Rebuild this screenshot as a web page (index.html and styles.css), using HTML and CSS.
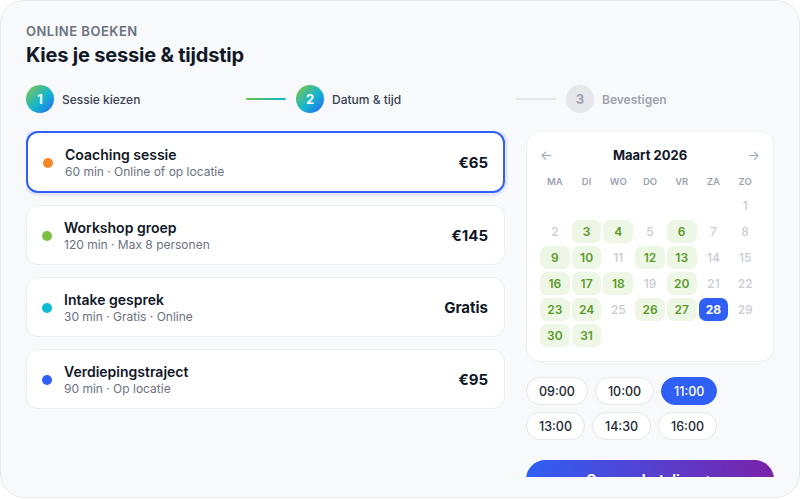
FILE: index.html
```html
<!DOCTYPE html>
<html lang="nl">
<head>
<meta charset="utf-8">
<title>Online boeken</title>
<link rel="stylesheet" href="styles.css">
</head>
<body>
<div class="card">
  <div class="eyebrow">ONLINE BOEKEN</div>
  <h1 class="title">Kies je sessie &amp; tijdstip</h1>
  <div class="steps">
    <div class="step done">
      <span class="num">1</span><span class="label">Sessie kiezen</span>
      <span class="line active"></span>
    </div>
    <div class="step done">
      <span class="num">2</span><span class="label">Datum &amp; tijd</span>
      <span class="line"></span>
    </div>
    <div class="step todo">
      <span class="num">3</span><span class="label">Bevestigen</span>
    </div>
  </div>
  <div class="main">
    <div class="sessions">
      <div class="session selected">
        <span class="dot orange"></span>
        <div class="info"><div class="name">Coaching sessie</div><div class="meta">60 min · Online of op locatie</div></div>
        <div class="price">€65</div>
      </div>
      <div class="session">
        <span class="dot green"></span>
        <div class="info"><div class="name">Workshop groep</div><div class="meta">120 min · Max 8 personen</div></div>
        <div class="price">€145</div>
      </div>
      <div class="session">
        <span class="dot cyan"></span>
        <div class="info"><div class="name">Intake gesprek</div><div class="meta">30 min · Gratis · Online</div></div>
        <div class="price">Gratis</div>
      </div>
      <div class="session">
        <span class="dot blue"></span>
        <div class="info"><div class="name">Verdiepingstraject</div><div class="meta">90 min · Op locatie</div></div>
        <div class="price">€95</div>
      </div>
    </div>
    <div class="side">
      <div class="calendar">
        <div class="cal-head"><span class="arrow">←</span><span class="month">Maart 2026</span><span class="arrow">→</span></div>
        <div class="weekdays"><span>MA</span><span>DI</span><span>WO</span><span>DO</span><span>VR</span><span>ZA</span><span>ZO</span></div>
        <div class="days">
          <span></span><span></span><span></span><span></span><span></span><span></span>
          <span class="off">1</span>
          <span class="off">2</span><span class="av">3</span><span class="av">4</span><span class="off">5</span><span class="av">6</span><span class="off">7</span><span class="off">8</span>
          <span class="av">9</span><span class="av">10</span><span class="off">11</span><span class="av">12</span><span class="av">13</span><span class="off">14</span><span class="off">15</span>
          <span class="av">16</span><span class="av">17</span><span class="av">18</span><span class="off">19</span><span class="av">20</span><span class="off">21</span><span class="off">22</span>
          <span class="av">23</span><span class="av">24</span><span class="off">25</span><span class="av">26</span><span class="av">27</span><span class="sel">28</span><span class="off">29</span>
          <span class="av">30</span><span class="av">31</span>
        </div>
      </div>
      <div class="slots">
        <span class="slot">09:00</span><span class="slot">10:00</span><span class="slot sel">11:00</span>
        <span class="slot">13:00</span><span class="slot">14:30</span><span class="slot">16:00</span>
      </div>
      <button class="pay">Ga naar betaling →</button>
    </div>
  </div>
</div>
</body>
</html>
```
FILE: styles.css
```css
* { box-sizing: border-box; }
html, body { margin: 0; padding: 0; background: #ffffff; }
body { font-family: Inter, "Noto Sans", sans-serif; color: #111827; }

.card {
  width: 800px;
  height: 498px;
  background: #f8f9fb;
  border: 1px solid #e8eaee;
  border-radius: 24px;
  padding: 22px 25px 20px 25px;
  display: flex;
  flex-direction: column;
  overflow: hidden;
}

.eyebrow {
  font-size: 13px;
  line-height: 16px;
  font-weight: 600;
  letter-spacing: 0.5px;
  color: #6b7280;
}
.title {
  margin: 3px 0 0;
  font-size: 20px;
  line-height: 26px;
  font-weight: 700;
  color: #111827;
  letter-spacing: -0.2px;
}

.steps {
  display: flex;
  gap: 10px;
  margin-top: 17px;
  height: 28px;
}
.step {
  display: flex;
  align-items: center;
  width: 260px;
}
.step.todo { width: auto; }
.num {
  width: 28px;
  height: 28px;
  border-radius: 50%;
  display: flex;
  align-items: center;
  justify-content: center;
  font-size: 13px;
  font-weight: 700;
  color: #fff;
  background: linear-gradient(135deg, #8cc63f 0%, #12b6cf 55%, #2f5ff5 100%);
}
.label {
  margin-left: 8px;
  font-size: 12px;
  font-weight: 500;
  color: #374151;
}
.todo .num { background: #e5e7eb; color: #9ca3af; }
.todo .label { color: #9ca3af; font-weight: 600; }
.line {
  margin-left: auto;
  width: 40px;
  height: 2px;
  border-radius: 1px;
  background: #e5e7eb;
}
.line.active { background: linear-gradient(90deg, #6cc04a, #0cb8d4); }

.main {
  margin-top: 18px;
  flex: 1;
  min-height: 0;
  overflow: hidden;
  display: grid;
  grid-template-columns: 1fr 248px;
  gap: 21px;
  align-items: start;
}

.sessions { display: flex; flex-direction: column; gap: 12px; }
.session {
  display: flex;
  align-items: center;
  background: #fff;
  border: 1px solid #eceef1;
  border-radius: 12px;
  padding: 13px 16px 12px 15px;
}
.session.selected {
  border: 2px solid #2f5ff5;
  padding: 13px 15px 12px 15px;
  box-shadow: 0 0 0 3px rgba(47, 95, 245, 0.10);
}
.dot { width: 10px; height: 10px; border-radius: 50%; flex: none; }
.dot.orange { background: #f5862a; }
.dot.green { background: #7bc043; }
.dot.cyan { background: #0fbcd4; }
.dot.blue { background: #2f5ff5; }
.info { margin-left: 12px; flex: 1; }
.name { font-size: 14px; line-height: 18px; font-weight: 600; color: #111827; }
.meta { margin-top: 1px; font-size: 12px; line-height: 14px; color: #6b7280; }
.price { font-size: 15px; font-weight: 700; color: #111827; }

.calendar {
  background: #fff;
  border: 1px solid #eef0f3;
  border-radius: 14px;
  padding: 13px 13px 14px;
}
.cal-head {
  display: flex;
  align-items: center;
  justify-content: space-between;
  height: 20px;
}
.arrow { font-size: 13px; color: #9ca3af; }
.month { font-size: 13px; font-weight: 700; color: #111827; }
.weekdays {
  margin-top: 9px;
  display: grid;
  grid-template-columns: repeat(7, 1fr);
  column-gap: 2px;
  text-align: center;
  font-size: 9.5px;
  line-height: 16px;
  font-weight: 600;
  color: #9ca3af;
}
.days {
  margin-top: 4px;
  display: grid;
  grid-template-columns: repeat(7, 1fr);
  column-gap: 2px;
  row-gap: 3px;
}
.days span {
  height: 23px;
  display: flex;
  align-items: center;
  justify-content: center;
  font-size: 12px;
  border-radius: 7px;
}
.days .off { color: #c9ccd3; font-weight: 500; }
.days .av { background: #eef7e6; color: #5a9a2a; font-weight: 600; }
.days .sel { background: #2f5ff5; color: #fff; font-weight: 700; }

.slots {
  margin-top: 15px;
  display: flex;
  flex-wrap: wrap;
  gap: 7px 7px;
  width: 205px;
}
.slot {
  height: 28px;
  display: inline-flex;
  align-items: center;
  padding: 0 12px;
  border: 1px solid #e5e7eb;
  border-radius: 14px;
  background: #fff;
  font-size: 12.5px;
  font-weight: 500;
  color: #1f2937;
}
.slot.sel { background: #2f5ff5; border-color: #2f5ff5; color: #fff; }

.pay {
  margin-top: 20px;
  width: 100%;
  border: none;
  border-radius: 20px;
  padding: 11px 0;
  font-family: Inter, "Noto Sans", sans-serif;
  font-size: 14px;
  line-height: 17px;
  font-weight: 700;
  color: #fff;
  background: linear-gradient(90deg, #2f5ff5 0%, #7b22aa 100%);
}
```
